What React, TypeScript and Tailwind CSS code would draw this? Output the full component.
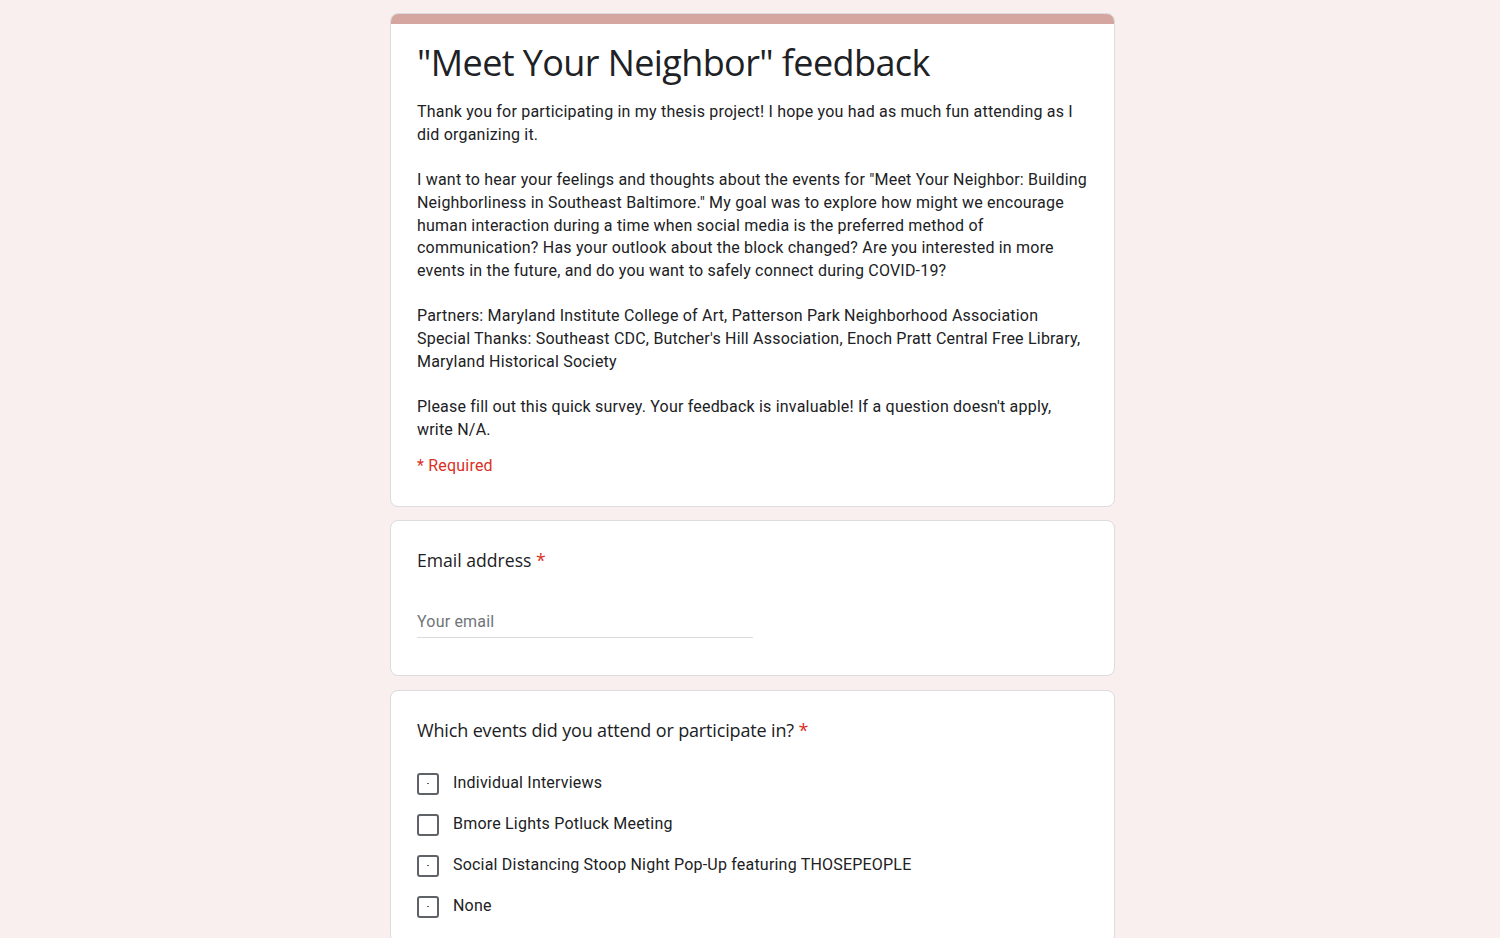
const EVENTS = [
  "Individual Interviews",
  "Bmore Lights Potluck Meeting",
  "Social Distancing Stoop Night Pop-Up featuring THOSEPEOPLE",
  "None",
];

const body = "font-['Roboto',sans-serif] text-[16px] leading-[22.7px] tracking-[0.2px] text-[#202124]";
const heading = "font-['Open_Sans',sans-serif] text-[#202124]";

function Card({ children, className = "" }: { children: React.ReactNode; className?: string }) {
  return (
    <div className={`rounded-[8px] border border-[#dadce0] bg-white px-[26px] ${className}`}>
      {children}
    </div>
  );
}

function Checkbox({ dot }: { dot: boolean }) {
  return (
    <span className="flex size-[22px] shrink-0 items-center justify-center rounded-[3px] border-2 border-[#5f6368]">
      {dot && <span className="size-[1.5px] bg-[#5f6368]" />}
    </span>
  );
}

export default function App() {
  return (
    <div className="min-h-screen bg-[#f8efee] pt-[13px]">
      <div className="ml-[390px] flex w-[725px] flex-col gap-[13px]">
        <div className="overflow-hidden rounded-[8px] border border-[#dadce0] bg-white">
          <div className="h-[10px] bg-[#d5a5a0]" />
          <div className="px-[26px] pt-[17px] pb-[29px]">
            <h1 className={`${heading} text-[36px] leading-[44px] tracking-[-0.6px]`}>
              "Meet Your Neighbor" feedback
            </h1>
            <p className={`${body} mt-[16px] whitespace-pre-line`}>
              {`Thank you for participating in my thesis project! I hope you had as much fun attending as I did organizing it.

I want to hear your feelings and thoughts about the events for "Meet Your Neighbor: Building Neighborliness in Southeast Baltimore." My goal was to explore how might we encourage human interaction during a time when social media is the preferred method of communication? Has your outlook about the block changed? Are you interested in more events in the future, and do you want to safely connect during COVID-19?

Partners: Maryland Institute College of Art, Patterson Park Neighborhood Association
Special Thanks: Southeast CDC, Butcher's Hill Association, Enoch Pratt Central Free Library, Maryland Historical Society

Please fill out this quick survey. Your feedback is invaluable! If a question doesn't apply, write N/A.`}
            </p>
            <p className="mt-[12px] font-['Roboto',sans-serif] text-[16px] leading-[23px] tracking-[0.2px] text-[#d93025]">
              * Required
            </p>
          </div>
        </div>

        <Card className="pt-[26px] pb-[37px]">
          <div className={`${heading} text-[17.6px] leading-[26px]`}>
            Email address <span className="text-[#d93025]">*</span>
          </div>
          <div className="mt-[38px] w-[336px] border-b border-[#dadce0] pb-[4px] font-['Roboto',sans-serif] text-[16px] leading-[22px] tracking-[0.2px] text-[#70757a]">
            Your email
          </div>
        </Card>

        <Card className="mt-[1px] pt-[26px] pb-[24px]">
          <div className={`${heading} text-[18px] leading-[26px] tracking-[-0.15px]`}>
            Which events did you attend or participate in? <span className="text-[#d93025]">*</span>
          </div>
          <div className="mt-[30px] flex flex-col gap-[19px]">
            {EVENTS.map((e, i) => (
              <label key={e} className="flex h-[22px] items-center gap-[14px]">
                <Checkbox dot={i !== 1} />
                <span className={body}>{e}</span>
              </label>
            ))}
          </div>
        </Card>
      </div>
    </div>
  );
}
